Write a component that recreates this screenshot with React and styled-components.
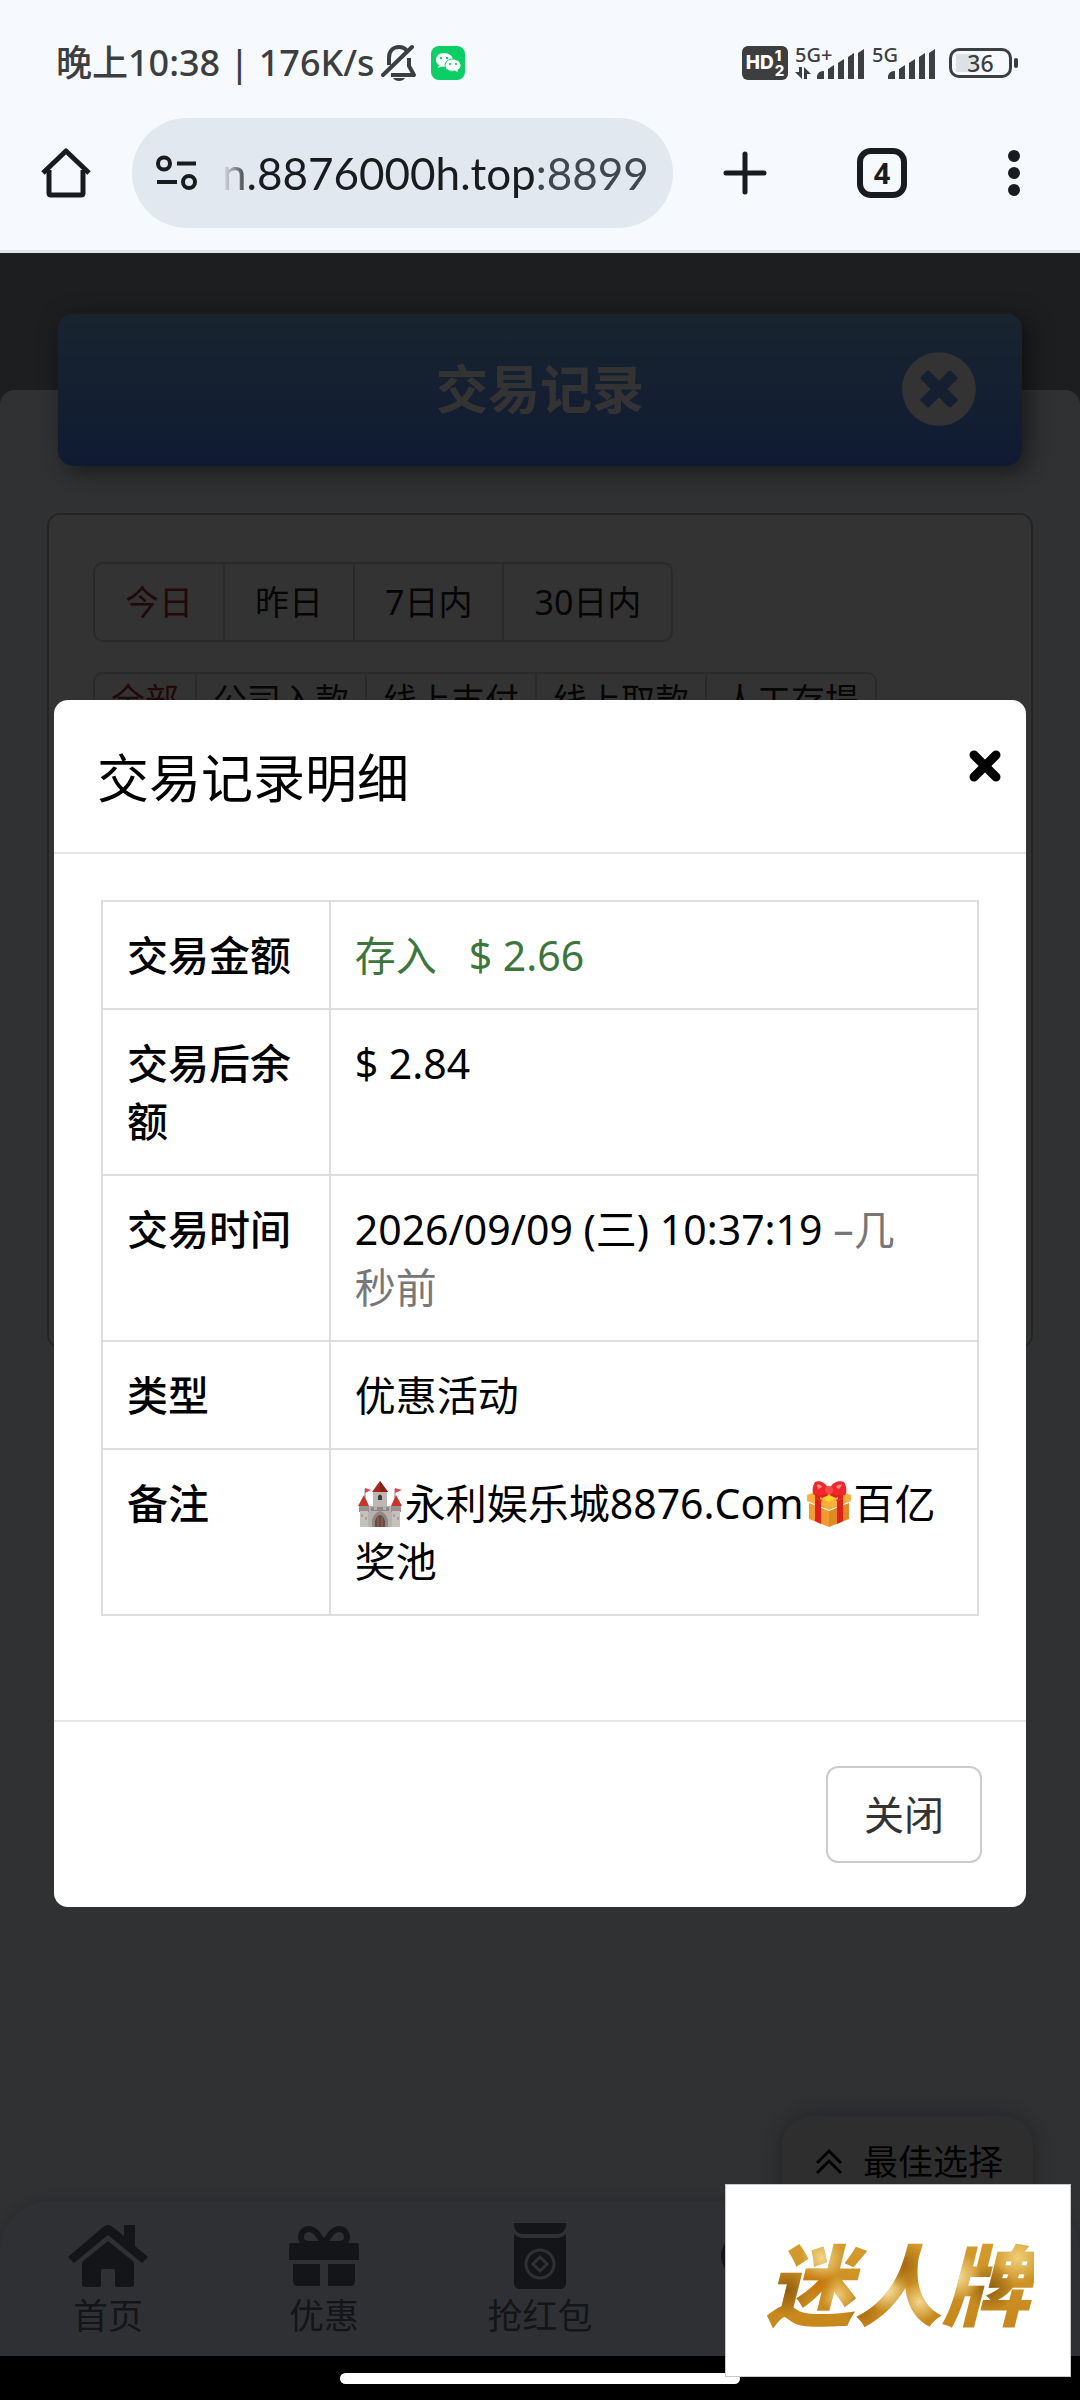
import React from "react";
import styled, { createGlobalStyle } from "styled-components";
import { FaTimesCircle } from "react-icons/fa";

const GlobalStyle = createGlobalStyle`
  * {
    box-sizing: border-box;
  }
  body {
    margin: 0;
    background: #000;
    color: #000;
    font-family: "Noto Sans", "Noto Sans CJK SC", sans-serif;
  }
  button {
    font-family: inherit;
    border: 0;
    margin: 0;
    padding: 0;
    background: none;
    color: inherit;
    cursor: pointer;
  }
  svg {
    display: block;
  }
`;

const days = ["今日", "昨日", "7日内", "30日内"];
const kinds = ["全部", "公司入款", "线上支付", "线上取款", "人工存提"];

// ---------- status bar icons ----------

const BellOff = () => (
  <svg width="36" height="38" viewBox="0 0 36 38" fill="none" stroke="#3c3e40" strokeWidth="4">
    <path d="M8 21V14C8 7 12 3 18 3C21 3 24 4 26 7" />
    <path d="M28 14V22L33 31H10" strokeLinejoin="round" />
    <path d="M2 31L31 3" strokeLinecap="round" />
    <path d="M12 34H24C22 38 14 38 12 34Z" fill="#3c3e40" stroke="none" />
  </svg>
);

const WeChat = () => (
  <svg width="34" height="34" viewBox="0 0 34 34">
    <rect width="34" height="34" rx="8" fill="#0bcf66" />
    <path
      d="M13 7C8 7 5 10 5 14C5 16 6 18 8 19L7 22L11 20.500C17 22 22 19 22 14C22 10 18 7 13 7Z"
      fill="#fff"
    />
    <path
      d="M22 13C17 13 14 16 14 19.500C14 24 19 26 24 25L27 27L27 24C29 23 30 21 30 19.500C30 16 26 13 22 13Z"
      fill="#fff"
      stroke="#0bcf66"
      strokeWidth="1"
    />
    <g fill="#0bcf66">
      <circle cx="10" cy="12" r="1.200" />
      <circle cx="16" cy="12" r="1.200" />
      <circle cx="19" cy="18" r="1.100" />
      <circle cx="25" cy="18" r="1.100" />
    </g>
  </svg>
);

const Bars = () => (
  <svg width="48" height="30" viewBox="0 0 48 30" fill="#3c3e40">
    <path d="M0 30V27Q1 22 7 22V30Z" />
    <path d="M11 30V20L17 16V30Z" />
    <path d="M21 30V14L27 10V30Z" />
    <path d="M31 30V8L37 4V30Z" />
    <path d="M41 30V4L47 0V30Z" />
  </svg>
);

const DataArrows = () => (
  <svg width="16" height="12" viewBox="0 0 16 12" fill="#3c3e40">
    <path d="M7 0V12L0 5H4V0Z" />
    <path d="M9 12V0L16 7H12V12Z" />
  </svg>
);

// ---------- toolbar icons ----------

const HomeOutline = () => (
  <svg width="50" height="50" viewBox="0 0 50 50" fill="none" stroke="#181c1f" strokeWidth="5">
    <path d="M8 22V45Q8 47 10 47H40Q42 47 42 45V22" />
    <path d="M2 25L25 3L48 25" strokeLinejoin="round" />
  </svg>
);

const Tune = () => (
  <svg width="42" height="36" viewBox="0 0 42 36" fill="none" stroke="#181c1f" strokeWidth="4">
    <circle cx="8" cy="8.500" r="6" />
    <path d="M21 8.500H40" />
    <path d="M1 27H21" />
    <circle cx="33" cy="27" r="6" />
  </svg>
);

const Plus = () => (
  <svg width="44" height="44" viewBox="0 0 44 44" stroke="#181c1f" strokeWidth="5" strokeLinecap="round">
    <path d="M22 3V41M3 22H41" />
  </svg>
);

const Dots = () => (
  <svg width="12" height="46" viewBox="0 0 12 46" fill="#181c1f">
    <circle cx="6" cy="6" r="6" />
    <circle cx="6" cy="23" r="6" />
    <circle cx="6" cy="40" r="6" />
  </svg>
);

// ---------- page icons ----------

const Cross = () => (
  <svg width="32" height="32" viewBox="0 0 32 32" stroke="#000" strokeWidth="9" strokeLinecap="round">
    <path d="M5 5L27 27M27 5L5 27" />
  </svg>
);

const ChevronsUp = () => (
  <svg width="28" height="26" viewBox="0 0 28 26" fill="none" stroke="#111" strokeWidth="3">
    <path d="M2 14L14 2L26 14M2 24L14 12L26 24" />
  </svg>
);

const HouseSolid = () => (
  <svg width="80" height="62" viewBox="0 0 80 62" fill="currentColor">
    <path d="M35 2Q40 -2 45 2L56 11V0H67V21L80 32L74 38L40 10L6 38L0 32Z" />
    <path d="M40 16L66 37V60Q66 62 64 62H49Q47 62 47 60V46Q47 44 45 44H35Q33 44 33 46V60Q33 62 31 62H16Q14 62 14 60V37Z" />
  </svg>
);

const GiftSolid = () => (
  <svg width="70" height="62" viewBox="0 0 70 62" fill="currentColor">
    <path
      d="M35 19C29 9 26 4 20 4C15 4 12 8 12 12C12 16 15 19 20 19H50C55 19 58 16 58 12C58 8 55 4 50 4C44 4 41 9 35 19Z"
      fill="none"
      stroke="currentColor"
      strokeWidth="6"
    />
    <path d="M3 18H67Q70 18 70 21V35H0V21Q0 18 3 18Z" />
    <path d="M4 39H31V61H9Q4 61 4 56Z" />
    <path d="M39 39H66V56Q66 61 61 61H39Z" />
  </svg>
);

const PacketSolid = () => (
  <svg width="52" height="66" viewBox="0 0 52 66" fill="currentColor">
    <path d="M0 0H52V4Q50 11 43 11H9Q2 11 0 4Z" />
    <path d="M0 11Q4 15 9 15H43Q48 15 52 11V60Q52 66 46 66H6Q0 66 0 60Z" />
    <circle cx="26" cy="41" r="14" fill="none" stroke="#ebf0ff" strokeWidth="3" />
    <path d="M26 34L33 41L26 48L19 41Z" fill="none" stroke="#ebf0ff" strokeWidth="3" />
  </svg>
);

const BubbleSolid = () => (
  <svg width="70" height="62" viewBox="0 0 70 62" fill="currentColor">
    <ellipse cx="35" cy="31" rx="35" ry="28" />
  </svg>
);

const Castle = () => (
  <svg width="46" height="46" viewBox="0 0 46 46" role="img" aria-label="城堡">
    <path d="M8 8V18M38 8V18" stroke="#8d8a89" strokeWidth="1" />
    <path d="M8 7L14 9L8 12ZM38 7L45 9L38 12Z" fill="#e8404a" />
    <path d="M16 10H30V28H16Z" fill="#bdb8b4" />
    <path d="M23 0L31 11H15Z" fill="#a8281e" />
    <path d="M23 0L31 11H23Z" fill="#8c2018" />
    <path d="M3 25H43V46H3Z" fill="#b7b1ad" />
    <path d="M2 25H12V31H2ZM34 25H44V31H34Z" fill="#98928f" />
    <path d="M3 30H11V46H3ZM35 30H43V46H35Z" fill="#c5c0bc" />
    <path d="M7 14L12 25H1ZM39 14L45 25H34Z" fill="#c8342a" />
    <path d="M14 26H17V29H20V26H26V29H29V26H32V30H14Z" fill="#8f8986" />
    <path d="M21 19V15Q23 12 25 15V19Z" fill="#3e3836" />
    <path d="M15 46V39Q17 32 23 30Q29 32 31 39V46Z" fill="#8f8986" />
    <path d="M18 46V40Q19 35 23 34Q27 35 28 40V46Z" fill="#6b4a43" />
    <path d="M21 36V46M25 36V46" stroke="#a0685c" strokeWidth="1" />
    <path d="M5 33V36M9 36V39M37 33V36M41 36V39" stroke="#8f8986" strokeWidth="1" />
  </svg>
);

const GiftBox = () => (
  <svg width="44" height="46" viewBox="0 0 44 46" role="img" aria-label="礼物">
    <path d="M2 22L22 30V46L2 38Z" fill="#f09c2e" />
    <path d="M42 22L22 30V46L42 38Z" fill="#e08a24" />
    <path d="M0 14L22 6L44 14V20L22 29L0 20Z" fill="#f8b03a" />
    <path d="M8 17L14 20V43L8 40Z" fill="#e0201c" />
    <path d="M36 17L30 20V43L36 40Z" fill="#e0201c" />
    <path d="M8 11L14 9L24 14L14 20L8 17ZM36 11L30 9L20 14L30 20L36 17Z" fill="#e0201c" />
    <path d="M22 20L31 16V18L22 23L13 18V16Z" fill="#f8b03a" />
    <path d="M22 14L29 17L22 21L15 17Z" fill="#ffd42e" />
    <path d="M22 9C19 1 12 -1 8 1C5 6 5 12 7 14C13 15 18 14 22 12C26 14 32 15 38 14C40 12 40 6 37 1C32 -1 25 1 22 9Z" fill="#f0282c" />
    <path d="M10 4C12 3 14 4 15 6L11 8ZM35 4C33 3 30 4 29 6L32 8Z" fill="#ff8f8c" />
    <circle cx="22" cy="9" r="4" fill="#f8484a" />
  </svg>
);

export default function App() {
  return (
    <Screen>
      <GlobalStyle />
      <StatusBar>
        <Clock>晚上10:38 | 176K/s</Clock>
        <BellOff />
        <WeChatSlot>
          <WeChat />
        </WeChatSlot>
        <StatusRight>
          <HdBadge>
            HD
            <HdLines>
              <span>1</span>
              <span>2</span>
            </HdLines>
          </HdBadge>
          <Signal $width={70}>
            <Network>5G+</Network>
            <DataArrows />
            <BarsSlot>
              <Bars />
            </BarsSlot>
          </Signal>
          <Signal $width={64}>
            <Network>5G</Network>
            <BarsSlot>
              <Bars />
            </BarsSlot>
          </Signal>
          <Battery>
            <Level>
              <span>36</span>
            </Level>
            <Nub />
          </Battery>
        </StatusRight>
      </StatusBar>

      <Toolbar>
        <ToolButton $width={132} aria-label="主页">
          <HomeOutline />
        </ToolButton>
        <Address>
          <Tune />
          <Url>
            n.8876000h.top<Port>:8899</Port>
          </Url>
        </Address>
        <ToolButton $width={144} aria-label="新标签页">
          <Plus />
        </ToolButton>
        <ToolButton $width={130} aria-label="标签页">
          <TabCount>4</TabCount>
        </ToolButton>
        <ToolButton $width={133} aria-label="菜单">
          <Dots />
        </ToolButton>
      </Toolbar>

      <Main>
        <Banner>
          <BannerTitle>交易记录</BannerTitle>
          <BannerClose aria-label="返回">
            <FaTimesCircle />
          </BannerClose>
        </Banner>
        <Sheet>
          <Panel>
            <Segments>
              {days.map((label, i) => (
                <Segment key={label} $active={i === 0} $roomy>
                  {label}
                </Segment>
              ))}
            </Segments>
            <Segments>
              {kinds.map((label, i) => (
                <Segment key={label} $active={i === 0}>
                  {label}
                </Segment>
              ))}
            </Segments>
          </Panel>
          <NavArea>
            <BestPick>
              <ChevronsUp />
              最佳选择
            </BestPick>
            <BottomNav>
              <NavItem href="#home">
                <NavIcon>
                  <HouseSolid />
                </NavIcon>
                首页
              </NavItem>
              <NavItem href="#promo">
                <NavIcon>
                  <GiftSolid />
                </NavIcon>
                优惠
              </NavItem>
              <NavItem href="#packet">
                <NavIcon>
                  <PacketSolid />
                </NavIcon>
                抢红包
              </NavItem>
              <NavItem href="#service" aria-label="客服">
                <NavIcon>
                  <BubbleSolid />
                </NavIcon>
              </NavItem>
            </BottomNav>
          </NavArea>
        </Sheet>

        <Backdrop>
          <Modal role="dialog" aria-labelledby="detail-title">
            <ModalHeader>
              <ModalTitle id="detail-title">交易记录明细</ModalTitle>
              <ModalClose aria-label="关闭">
                <Cross />
              </ModalClose>
            </ModalHeader>
            <ModalBody>
              <Table>
                <tbody>
                  <tr>
                    <Th scope="row">交易金额</Th>
                    <Td>
                      <Income>存入&nbsp;&nbsp; $ 2.66</Income>
                    </Td>
                  </tr>
                  <tr>
                    <Th scope="row">交易后余额</Th>
                    <Td>$ 2.84</Td>
                  </tr>
                  <tr>
                    <Th scope="row">交易时间</Th>
                    <Td>
                      2026/09/09 (三) 10:37:19{" "}
                      <Muted>
                        –几
                        <br />
                        秒前
                      </Muted>
                    </Td>
                  </tr>
                  <tr>
                    <Th scope="row">类型</Th>
                    <Td>优惠活动</Td>
                  </tr>
                  <tr>
                    <Th scope="row">备注</Th>
                    <Td>
                      <Emoji>
                        <Castle />
                      </Emoji>
                      永利娱乐城8876.Com
                      <Emoji>
                        <GiftBox />
                      </Emoji>
                      百亿
                      <br />
                      奖池
                    </Td>
                  </tr>
                </tbody>
              </Table>
            </ModalBody>
            <ModalFooter>
              <CloseButton>关闭</CloseButton>
            </ModalFooter>
          </Modal>
        </Backdrop>
      </Main>

      <SystemBar>
        <Handle />
      </SystemBar>

      <Stamp>
        <Gold>迷人牌</Gold>
      </Stamp>
    </Screen>
  );
}

const Screen = styled.div`
  position: relative;
  display: flex;
  flex-direction: column;
  min-height: 100vh;
  overflow: hidden;
`;

const StatusBar = styled.header`
  display: flex;
  align-items: center;
  height: 118px;
  padding: 8px 62px 0 56px;
  background: #f6faff;
  color: #3c3e40;
`;

const Clock = styled.span`
  font-size: 36px;
  font-weight: 500;
  line-height: 42px;
  margin-right: 6px;
  white-space: nowrap;
`;

const WeChatSlot = styled.span`
  margin-left: 14px;
`;

const StatusRight = styled.div`
  display: flex;
  align-items: center;
  gap: 7px;
  margin-left: auto;
`;

const HdBadge = styled.span`
  display: flex;
  align-items: center;
  justify-content: center;
  gap: 1px;
  width: 46px;
  height: 34px;
  border-radius: 6px;
  background: #3c3e40;
  color: #fff;
  font: 800 19px/34px Inter, sans-serif;
`;

const HdLines = styled.span`
  display: flex;
  flex-direction: column;
  font-size: 15px;
  line-height: 15px;
`;

const Signal = styled.span`
  position: relative;
  display: flex;
  flex-direction: column;
  gap: 3px;
  width: ${(p) => p.$width}px;
  height: 34px;
`;

const Network = styled.span`
  font: 500 20px/18px "Noto Sans", sans-serif;
`;

const BarsSlot = styled.span`
  position: absolute;
  right: 0;
  bottom: 1px;
`;

const Battery = styled.span`
  display: flex;
  align-items: center;
  gap: 2px;
  margin-left: 6px;
`;

const Level = styled.span`
  display: flex;
  align-items: center;
  justify-content: center;
  width: 63px;
  height: 30px;
  border: 3px solid #3c3e40;
  border-radius: 10px;
  background: linear-gradient(90deg, #dde1e5 20px, transparent 20px) 4px 3px / 50px 18px no-repeat;
  font: 500 23px/24px "Noto Sans", sans-serif;
`;

const Nub = styled.span`
  width: 4px;
  height: 10px;
  border-radius: 2px;
  background: #3c3e40;
`;

const Toolbar = styled.nav`
  display: flex;
  align-items: center;
  padding-bottom: 22px;
  border-bottom: 3px solid #dee3e6;
  background: #f6faff;
  color: #181c1f;
`;

const ToolButton = styled.button`
  display: flex;
  align-items: center;
  justify-content: center;
  width: ${(p) => p.$width}px;
  height: 110px;
`;

const Address = styled.button`
  display: flex;
  flex: 1;
  align-items: center;
  gap: 24px;
  height: 110px;
  min-width: 0;
  padding: 0 24px;
  border-radius: 55px;
  background: #e2e8ef;
`;

const Url = styled.span`
  font-family: Lato, sans-serif;
  font-size: 44px;
  line-height: 56px;
  white-space: nowrap;
  mask-image: linear-gradient(90deg, transparent, #000 30px);
`;

const Port = styled.span`
  color: #40484f;
`;

const TabCount = styled.span`
  display: flex;
  align-items: center;
  justify-content: center;
  width: 50px;
  height: 50px;
  border: 6px solid #181c1f;
  border-radius: 14px;
  font: 700 29px/38px "Noto Sans", sans-serif;
`;

const Main = styled.main`
  position: relative;
  display: flex;
  flex: 1;
  flex-direction: column;
  padding-top: 61px;
  background: #8e949c;
`;

const Banner = styled.div`
  position: relative;
  display: grid;
  grid-template-columns: 1fr auto 1fr;
  align-items: center;
  height: 152px;
  margin: 0 58px;
  padding: 0 45px 2px;
  border-radius: 15px;
  background: linear-gradient(#7bb4e6, #5087ff);
  box-shadow: 6px 6px 24px rgba(0, 0, 0, 0.5);
`;

const BannerTitle = styled.h1`
  grid-column: 2;
  margin: 0;
  color: #fff;
  font-size: 52px;
  font-weight: 600;
  line-height: 74px;
`;

const BannerClose = styled.button`
  display: flex;
  justify-self: end;
  color: #fff;
  font-size: 76px;
`;

const Sheet = styled.section`
  display: flex;
  flex: 1;
  flex-direction: column;
  margin-top: -76px;
  padding-top: 123px;
  border-radius: 15px 15px 0 0;
  background: #f0f5fc;
`;

const Panel = styled.div`
  display: flex;
  flex-direction: column;
  align-items: flex-start;
  gap: 30px;
  min-height: 835px;
  margin: 0 47px;
  padding: 47px 44px;
  border: 2px solid #b4b4b4;
  border-radius: 13px;
  background: #fff;
`;

const Segments = styled.div`
  display: flex;
  border: 2px solid #d2d2d2;
  border-radius: 10px;
`;

const Segment = styled.button`
  padding: ${(p) => (p.$roomy ? "13px 30px" : "1px 16px")};
  color: ${(p) => (p.$active ? "#a03030" : "#222")};
  font-size: 34px;
  line-height: 50px;

  & + & {
    border-left: 2px solid #d2d2d2;
  }
`;

const NavArea = styled.div`
  position: relative;
  margin-top: auto;
`;

const BestPick = styled.button`
  position: absolute;
  right: 47px;
  bottom: 100%;
  display: flex;
  gap: 20px;
  align-items: center;
  height: 85px;
  padding: 6px 30px 0 33px;
  border-radius: 30px 30px 0 0;
  background: #e6e6e6;
  box-shadow: 0 0 24px rgba(0, 0, 0, 0.35);
  color: #111;
  font-size: 35px;
  line-height: 50px;
`;

const BottomNav = styled.nav`
  position: relative;
  display: grid;
  grid-template-columns: repeat(5, 1fr);
  height: 155px;
  padding-top: 22px;
  border-radius: 50px 50px 0 0;
  background: #ebf0ff;
  box-shadow: 0 0 16px rgba(0, 0, 0, 0.2);
`;

const NavItem = styled.a`
  display: flex;
  flex-direction: column;
  align-items: center;
  color: #64697a;
  font-size: 35px;
  line-height: 54px;
  text-decoration: none;
`;

const NavIcon = styled.span`
  display: flex;
  align-items: center;
  height: 66px;
`;

const Backdrop = styled.div`
  position: absolute;
  inset: 0;
  padding: 447px 5% 0;
  background: rgba(0, 0, 0, 0.8);
`;

const Modal = styled.section`
  border-radius: 14px;
  background: #fff;
`;

const ModalHeader = styled.div`
  display: flex;
  align-items: flex-start;
  justify-content: space-between;
  padding: 41px 25px 37px 43px;
  border-bottom: 2px solid #e5e5e5;
`;

const ModalTitle = styled.h2`
  margin: 0;
  font-size: 52px;
  font-weight: 400;
  line-height: 74px;
`;

const ModalClose = styled.button`
  margin-top: 9px;
`;

const ModalBody = styled.div`
  padding: 46px 47px 104px;
`;

const Table = styled.table`
  width: 100%;
  border-collapse: collapse;
  table-layout: fixed;
  font-size: 41px;
  line-height: 58px;
`;

const Th = styled.th`
  width: 26%;
  padding: 24px;
  border: 2px solid #ddd;
  font-weight: 500;
  text-align: left;
  vertical-align: top;
`;

const Td = styled.td`
  padding: 24px;
  border: 2px solid #ddd;
  vertical-align: top;
`;

const Income = styled.span`
  color: #3c763d;
`;

const Muted = styled.span`
  color: #777;
`;

const Emoji = styled.span`
  display: inline-flex;
  justify-content: center;
  width: 50px;
  vertical-align: -8px;
`;

const ModalFooter = styled.div`
  display: flex;
  justify-content: flex-end;
  padding: 44px;
  border-top: 2px solid #e5e5e5;
`;

const CloseButton = styled.button`
  padding: 18px 36px;
  border: 2px solid #ccc;
  border-radius: 12px;
  color: #333;
  font-size: 40px;
  line-height: 57px;
`;

const SystemBar = styled.footer`
  display: flex;
  justify-content: center;
  height: 44px;
  padding-top: 17px;
  background: #000;
`;

const Handle = styled.span`
  width: 37%;
  height: 11px;
  border-radius: 6px;
  background: #fff;
`;

const Stamp = styled.div`
  position: absolute;
  right: 9px;
  bottom: 23px;
  display: flex;
  align-items: center;
  justify-content: center;
  width: 346px;
  height: 193px;
  border: 1px solid #c8c8c8;
  background: #fff;
`;

// gold leaf: a few bright and dark patches over a warm base
const Gold = styled.strong`
  padding: 0 4px;
  background:
    radial-gradient(circle at 22% 30%, #f2d588 0, transparent 22px),
    radial-gradient(circle at 20% 52%, #c8740a 0, transparent 20px),
    radial-gradient(circle at 9% 58%, #8f5c0c 0, transparent 26px),
    radial-gradient(circle at 28% 62%, #eec972 0, transparent 18px),
    radial-gradient(circle at 52% 36%, #a5690f 0, transparent 24px),
    radial-gradient(circle at 46% 58%, #f6e0a0 0, transparent 22px),
    radial-gradient(circle at 58% 68%, #f3d78e 0, transparent 20px),
    radial-gradient(circle at 37% 76%, #a86c10 0, transparent 18px),
    radial-gradient(circle at 72% 46%, #f5dc98 0, transparent 24px),
    radial-gradient(circle at 84% 56%, #8c5d12 0, transparent 24px),
    radial-gradient(circle at 94% 30%, #f0cf78 0, transparent 26px),
    linear-gradient(#d7a030, #c4841a);
  background-clip: text;
  -webkit-background-clip: text;
  color: transparent;
  font-family: "Noto Sans CJK SC", sans-serif;
  font-size: 88px;
  font-style: italic;
  font-weight: 900;
  line-height: 116px;
`;
